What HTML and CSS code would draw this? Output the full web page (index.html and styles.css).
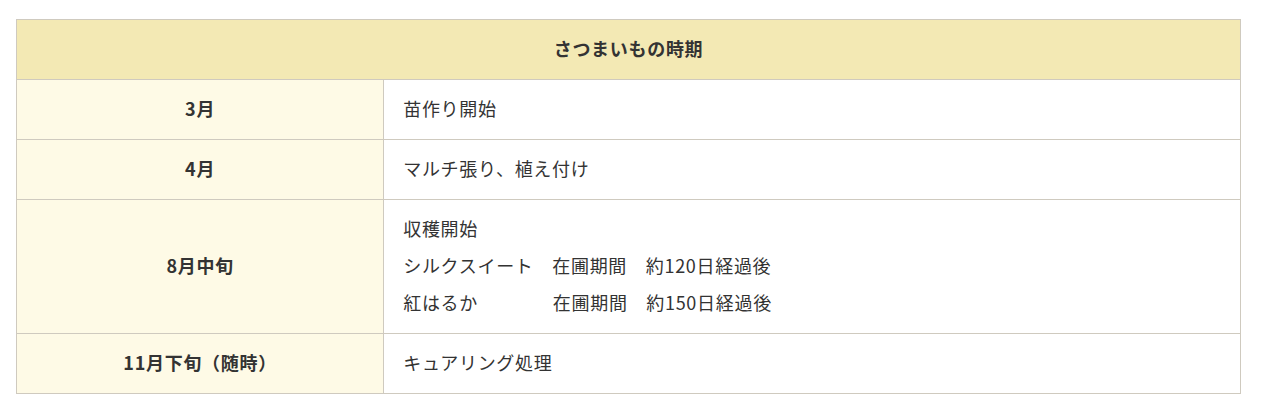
FILE: index.html
```html
<!DOCTYPE html>
<html lang="ja">
<head>
<meta charset="utf-8">
<link rel="stylesheet" href="styles.css">
</head>
<body>
<table class="period">
  <colgroup>
    <col class="col-month">
    <col class="col-desc">
  </colgroup>
  <thead>
    <tr><th colspan="2" class="head">さつまいもの時期</th></tr>
  </thead>
  <tbody>
    <tr><th class="month">3月</th><td class="desc">苗作り開始</td></tr>
    <tr><th class="month">4月</th><td class="desc">マルチ張り、植え付け</td></tr>
    <tr><th class="month">8月中旬</th><td class="desc">収穫開始<br>シルクスイート　在圃期間　約120日経過後<br>紅はるか　　　　在圃期間　約150日経過後</td></tr>
    <tr><th class="month">11月下旬（随時）</th><td class="desc">キュアリング処理</td></tr>
  </tbody>
</table>
</body>
</html>
```
FILE: styles.css
```css
html, body {
  margin: 0;
  padding: 0;
  background: #fff;
}
body {
  padding: 19px 22px 0 16px;
  font-family: "Noto Sans CJK JP", "Noto Sans", sans-serif;
  color: #333;
  font-size: 18px;
  letter-spacing: 0.7px;
}
.period {
  width: 100%;
  border-collapse: collapse;
  table-layout: fixed;
}
.col-month {
  width: 30%;
}
.period th, .period td {
  border: 1px solid #cfcabf;
  line-height: 37px;
  padding: 10px 19px 12px;
}
.head {
  background: #f3e9b4;
  text-align: center;
  font-weight: bold;
}
.month {
  background: #fefae6;
  text-align: center;
  font-weight: bold;
}
.desc {
  text-align: left;
  background: #fff;
}
```
